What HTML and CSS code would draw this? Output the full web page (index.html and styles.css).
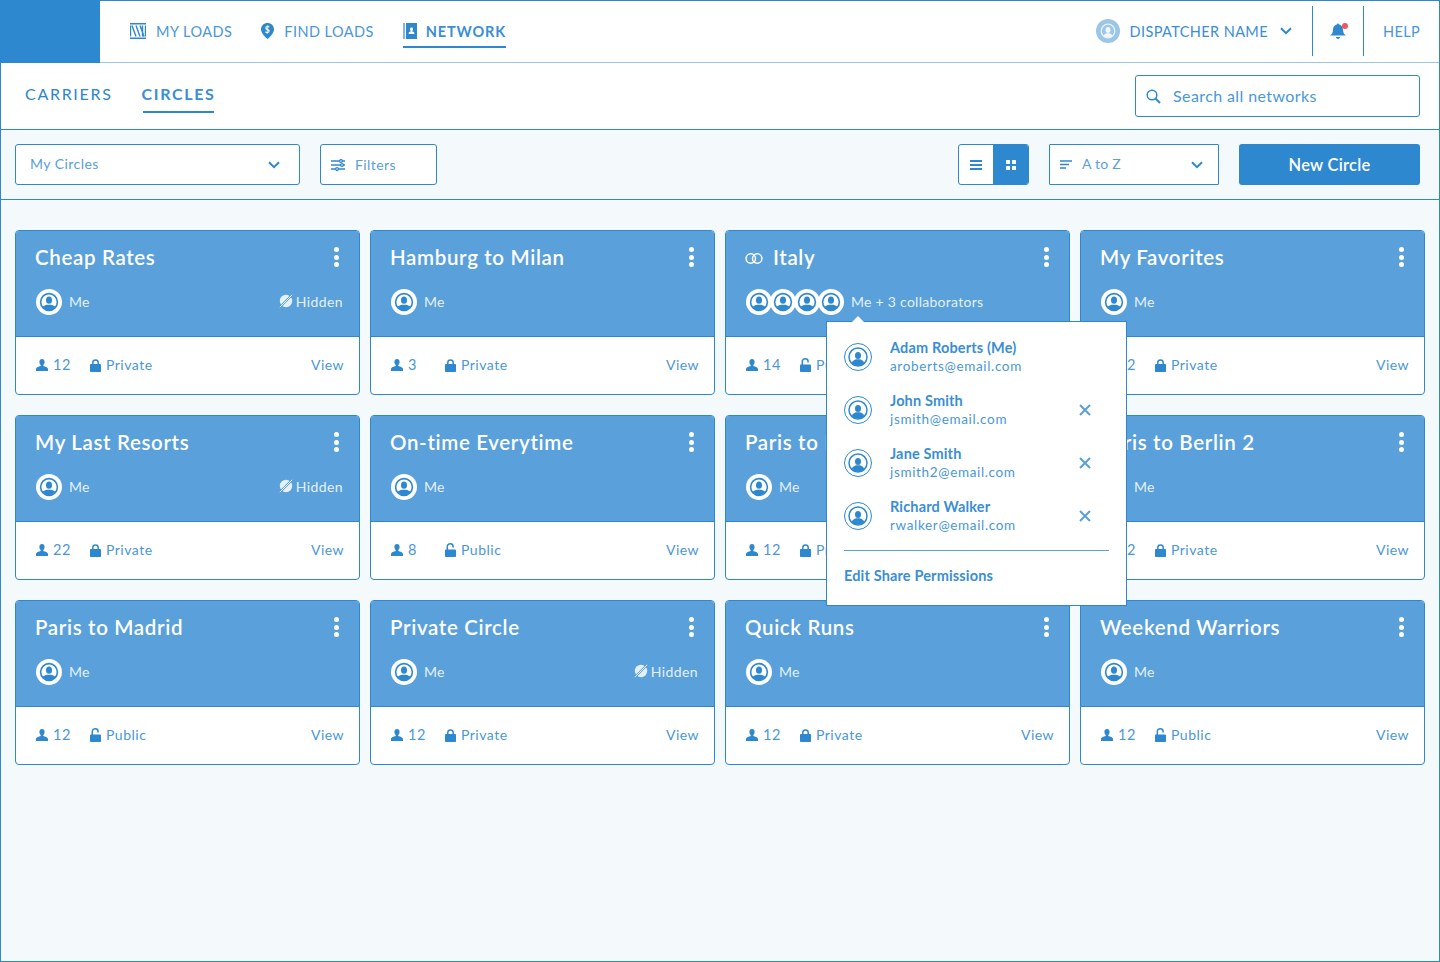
FILE: index.html
```html
<!DOCTYPE html>
<html lang="en">
<head>
<meta charset="utf-8">
<title>Circles</title>
<link rel="stylesheet" href="styles.css">
</head>
<body>
<svg class="defs" width="0" height="0" aria-hidden="true">
  <defs>
    <clipPath id="clip-ring"><circle cx="13" cy="13" r="8.2"/></clipPath>
    <symbol id="i-avatar" viewBox="0 0 26 26">
      <circle cx="13" cy="13" r="13" fill="#fff"/>
      <circle cx="13" cy="13" r="8.4" fill="none" stroke="#2e88cf" stroke-width="1.6"/>
      <g clip-path="url(#clip-ring)" fill="#2e88cf"><ellipse cx="13" cy="11.2" rx="3" ry="3.6"/><path d="M5 22c0-4 3-5.600 6-6.200h4c3 .6 6 2.200 6 6.200z"/></g>
    </symbol>
    <symbol id="i-avatar-line" viewBox="0 0 28 28">
      <circle cx="14" cy="14" r="13.500" fill="#fff" stroke="#2e88cf"/>
      <circle cx="14" cy="14" r="9" fill="none" stroke="#2e88cf" stroke-width="1.500"/>
      <g fill="#2e88cf"><ellipse cx="14" cy="12.500" rx="3" ry="3.500"/><path d="M7.500 20.500c1-3 3-3.700 4.500-4.200h4c1.500.5 3.500 1.200 4.500 4.200c-3.500 2.500-9.500 2.500-13 0z"/></g>
    </symbol>
    <symbol id="i-person" viewBox="0 0 12 12">
      <path fill="#2e88cf" d="M6 0c1.700 0 2.600 1.200 2.600 2.900 0 1.300-.6 2.400-1.300 3v1c1.800.6 4.700 1.300 4.700 3V12H0v-2.100c0-1.700 2.900-2.400 4.700-3v-1C4 5.300 3.400 4.200 3.400 2.900 3.400 1.200 4.300 0 6 0z"/>
    </symbol>
    <symbol id="i-lock" viewBox="0 0 11 13">
      <path fill="none" stroke="#2e88cf" stroke-width="1.500" d="M2.800 6V3.600C2.800 2 4 1 5.500 1s2.700 1 2.700 2.600V6"/>
      <rect y="5" width="11" height="8" rx=".8" fill="#2e88cf"/>
    </symbol>
    <symbol id="i-lock-open" viewBox="0 0 11 14">
      <path fill="none" stroke="#2e88cf" stroke-width="1.500" d="M2.300 7V3.500C2.300 1.900 3.600.8 5.200.8s2.900 1.100 2.900 2.700v.9"/>
      <rect y="6.500" width="11" height="7.500" rx=".8" fill="#2e88cf"/>
    </symbol>
    <symbol id="i-hidden" viewBox="0 0 14 14">
      <circle cx="7" cy="7" r="6.200" fill="#e4f0fa"/>
      <path d="M0 14L14 0" stroke="#5aa0da" stroke-width="2.200"/>
      <path d="M.8 13.200L13.200 .8" stroke="#e4f0fa" stroke-width="1"/>
    </symbol>
    <symbol id="i-chevron" viewBox="0 0 12 8">
      <path d="M1 1.300l5 4.800 5-4.800" fill="none" stroke="#2e88cf" stroke-width="2"/>
    </symbol>
    <symbol id="i-close" viewBox="0 0 12 12">
      <path d="M1 1l10 10M11 1L1 11" fill="none" stroke="#5aa0da" stroke-width="2"/>
    </symbol>
  </defs>
</svg>

<div class="app">
  <header class="topbar">
    <div class="logo"></div>
    <nav class="mainnav">
      <a class="navlink">
        <svg class="nav-icon" width="16" height="16" viewBox="0 0 16 16"><g fill="#2e88cf"><rect width="16" height="1.500"/><rect y="14.500" width="16" height="1.500"/><rect y="2.500" width="1.200" height="11"/><rect x="14.800" y="2.500" width="1.200" height="11"/></g><path d="M2 2.500l4 11M6 2.500l4 11M10 2.500l4 11M12.500 2.500v11" stroke="#2e88cf" stroke-width="1.400" fill="none"/></svg>
        MY LOADS
      </a>
      <a class="navlink">
        <svg class="nav-icon" width="13" height="16" viewBox="0 0 13 16"><path fill="#2e88cf" d="M6.500 0C10 0 13 2.700 13 6.200c0 3.800-4 7.800-6.500 9.800C4 14 0 10 0 6.200 0 2.700 3 0 6.500 0z"/><text class="pin-text" x="6.500" y="9.500" text-anchor="middle">$</text></svg>
        FIND LOADS
      </a>
      <a class="navlink is-current">
        <svg class="nav-icon" width="14" height="16" viewBox="0 0 14 16"><rect width="2" height="16" fill="#7fb6e2"/><rect x="3" width="11" height="16" fill="#2e88cf"/><path fill="#fff" d="M8.500 4.500c1 0 1.500.7 1.500 1.700 0 .7-.3 1.300-.7 1.600v.7c1 .3 2 .6 2 1.500v1H5.700v-1c0-.9 1-1.200 2-1.500v-.7c-.4-.3-.7-.9-.7-1.600 0-1 .5-1.700 1.500-1.700z"/></svg>
        NETWORK
      </a>
    </nav>
    <div class="usermenu">
      <svg class="user-avatar" width="24" height="24" viewBox="0 0 24 24"><circle cx="12" cy="12" r="12" fill="#9cc6e8"/><circle cx="12" cy="12" r="6.800" fill="none" stroke="#fff" stroke-width="1.300" opacity=".8"/><ellipse cx="12" cy="11" rx="2.500" ry="3" fill="#fff" opacity=".85"/><path d="M7.500 17c1-2.200 2.500-2.700 4.500-2.700s3.500.5 4.500 2.700c-2.500 1.500-6.500 1.500-9 0z" fill="#fff" opacity=".85"/></svg>
      <span class="username">DISPATCHER NAME</span>
      <svg class="chev" width="12" height="8"><use href="#i-chevron"/></svg>
    </div>
    <div class="bell-cell">
      <svg width="16" height="17" viewBox="0 0 16 17"><path fill="#2e88cf" d="M8 1.500c.7 0 1.100.4 1.200 1C11.500 3.100 13 5 13 7.500c0 3 1 4.700 3 6H0c2-1.300 3-3 3-6C3 5 4.500 3.100 6.800 2.500c.1-.6.500-1 1.200-1z"/><path fill="#2e88cf" d="M6 15h4c0 1-1 2-2 2s-2-1-2-2z"/></svg>
      <span class="bell-dot"></span>
    </div>
    <a class="help">HELP</a>
  </header>

  <div class="subbar">
    <a class="tab">CARRIERS</a>
    <a class="tab is-current">CIRCLES</a>
    <div class="search">
      <svg width="15" height="15" viewBox="0 0 15 15"><circle cx="6" cy="6" r="4.800" fill="none" stroke="#2e88cf" stroke-width="1.500"/><path d="M9.500 9.500L14 14" stroke="#2e88cf" stroke-width="2"/></svg>
      <span>Search all networks</span>
    </div>
  </div>

  <div class="toolbar">
    <div class="select select-circles"><span>My Circles</span><svg width="12" height="8"><use href="#i-chevron"/></svg></div>
    <div class="filters">
      <svg width="14" height="12" viewBox="0 0 14 12"><g fill="none" stroke="#2e88cf" stroke-width="1.300"><path d="M0 2h14M0 6h14M0 10h14"/><circle cx="10" cy="2" r="1.400" fill="#fff"/><circle cx="11" cy="6" r="1.400" fill="#fff"/><circle cx="6" cy="10" r="1.400" fill="#fff"/></g></svg>
      <span>Filters</span>
    </div>
    <div class="viewtoggle">
      <div class="view-btn">
        <svg width="12" height="10" viewBox="0 0 12 10"><path d="M0 1h12M0 5h12M0 9h12" stroke="#2e88cf" stroke-width="2"/></svg>
      </div>
      <div class="view-btn is-on">
        <svg width="10" height="10" viewBox="0 0 10 10"><g fill="#fff"><rect width="4" height="4" rx=".5"/><rect x="6" width="4" height="4" rx=".5"/><rect y="6" width="4" height="4" rx=".5"/><rect x="6" y="6" width="4" height="4" rx=".5"/></g></svg>
      </div>
    </div>
    <div class="select select-sort">
      <svg class="sort-icon" width="12" height="9" viewBox="0 0 12 9"><path d="M0 1h12M0 4.500h9M0 8h6" stroke="#2e88cf" stroke-width="1.600"/></svg>
      <span>A to Z</span>
      <svg class="sort-chev" width="12" height="8"><use href="#i-chevron"/></svg>
    </div>
    <button class="primary">New Circle</button>
  </div>

  <main class="grid">
    <article class="card">
      <div class="card-head">
        <div class="title-row"><h2>Cheap Rates</h2><span class="kebab"><i></i><i></i><i></i></span></div>
        <div class="owner-row"><svg class="av" width="26" height="26"><use href="#i-avatar"/></svg><span>Me</span><span class="hidden-tag"><svg width="14" height="14"><use href="#i-hidden"/></svg>Hidden</span></div>
      </div>
      <div class="card-foot"><span class="count"><svg width="12" height="12"><use href="#i-person"/></svg>12</span><span class="privacy"><svg width="11" height="13"><use href="#i-lock"/></svg>Private</span><a class="view">View</a></div>
    </article>

    <article class="card">
      <div class="card-head">
        <div class="title-row"><h2>Hamburg to Milan</h2><span class="kebab"><i></i><i></i><i></i></span></div>
        <div class="owner-row"><svg class="av" width="26" height="26"><use href="#i-avatar"/></svg><span>Me</span></div>
      </div>
      <div class="card-foot"><span class="count"><svg width="12" height="12"><use href="#i-person"/></svg>3</span><span class="privacy"><svg width="11" height="13"><use href="#i-lock"/></svg>Private</span><a class="view">View</a></div>
    </article>

    <article class="card has-popover">
      <div class="card-head">
        <div class="title-row"><svg class="shared" width="18" height="11" viewBox="0 0 18 11"><g fill="none" stroke="#fff" stroke-width="1.500"><circle cx="5.800" cy="5.500" r="4.700"/><circle cx="12.200" cy="5.500" r="4.700"/></g></svg><h2>Italy</h2><span class="kebab"><i></i><i></i><i></i></span></div>
        <div class="owner-row"><span class="stack"><svg width="26" height="26"><use href="#i-avatar"/></svg><svg width="26" height="26"><use href="#i-avatar"/></svg><svg width="26" height="26"><use href="#i-avatar"/></svg><svg width="26" height="26"><use href="#i-avatar"/></svg></span><span>Me + 3 collaborators</span></div>
      </div>
      <div class="card-foot"><span class="count"><svg width="12" height="12"><use href="#i-person"/></svg>14</span><span class="privacy"><svg width="11" height="14"><use href="#i-lock-open"/></svg>Public</span><a class="view">View</a></div>
      <div class="popover">
        <div class="person"><svg width="28" height="28"><use href="#i-avatar-line"/></svg><div class="person-text"><b>Adam Roberts (Me)</b><span>aroberts@email.com</span></div></div>
        <div class="person"><svg width="28" height="28"><use href="#i-avatar-line"/></svg><div class="person-text"><b>John Smith</b><span>jsmith@email.com</span></div><svg class="remove" width="12" height="12"><use href="#i-close"/></svg></div>
        <div class="person"><svg width="28" height="28"><use href="#i-avatar-line"/></svg><div class="person-text"><b>Jane Smith</b><span>jsmith2@email.com</span></div><svg class="remove" width="12" height="12"><use href="#i-close"/></svg></div>
        <div class="person"><svg width="28" height="28"><use href="#i-avatar-line"/></svg><div class="person-text"><b>Richard Walker</b><span>rwalker@email.com</span></div><svg class="remove" width="12" height="12"><use href="#i-close"/></svg></div>
        <a class="edit-link">Edit Share Permissions</a>
      </div>
    </article>

    <article class="card">
      <div class="card-head">
        <div class="title-row"><h2>My Favorites</h2><span class="kebab"><i></i><i></i><i></i></span></div>
        <div class="owner-row"><svg class="av" width="26" height="26"><use href="#i-avatar"/></svg><span>Me</span></div>
      </div>
      <div class="card-foot"><span class="count"><svg width="12" height="12"><use href="#i-person"/></svg>12</span><span class="privacy"><svg width="11" height="13"><use href="#i-lock"/></svg>Private</span><a class="view">View</a></div>
    </article>

    <article class="card">
      <div class="card-head">
        <div class="title-row"><h2>My Last Resorts</h2><span class="kebab"><i></i><i></i><i></i></span></div>
        <div class="owner-row"><svg class="av" width="26" height="26"><use href="#i-avatar"/></svg><span>Me</span><span class="hidden-tag"><svg width="14" height="14"><use href="#i-hidden"/></svg>Hidden</span></div>
      </div>
      <div class="card-foot"><span class="count"><svg width="12" height="12"><use href="#i-person"/></svg>22</span><span class="privacy"><svg width="11" height="13"><use href="#i-lock"/></svg>Private</span><a class="view">View</a></div>
    </article>

    <article class="card">
      <div class="card-head">
        <div class="title-row"><h2>On-time Everytime</h2><span class="kebab"><i></i><i></i><i></i></span></div>
        <div class="owner-row"><svg class="av" width="26" height="26"><use href="#i-avatar"/></svg><span>Me</span></div>
      </div>
      <div class="card-foot"><span class="count"><svg width="12" height="12"><use href="#i-person"/></svg>8</span><span class="privacy"><svg width="11" height="14"><use href="#i-lock-open"/></svg>Public</span><a class="view">View</a></div>
    </article>

    <article class="card">
      <div class="card-head">
        <div class="title-row"><h2>Paris to Berlin</h2><span class="kebab"><i></i><i></i><i></i></span></div>
        <div class="owner-row"><svg class="av" width="26" height="26"><use href="#i-avatar"/></svg><span>Me</span></div>
      </div>
      <div class="card-foot"><span class="count"><svg width="12" height="12"><use href="#i-person"/></svg>12</span><span class="privacy"><svg width="11" height="13"><use href="#i-lock"/></svg>Private</span><a class="view">View</a></div>
    </article>

    <article class="card">
      <div class="card-head">
        <div class="title-row"><h2>Paris to Berlin 2</h2><span class="kebab"><i></i><i></i><i></i></span></div>
        <div class="owner-row"><svg class="av" width="26" height="26"><use href="#i-avatar"/></svg><span>Me</span></div>
      </div>
      <div class="card-foot"><span class="count"><svg width="12" height="12"><use href="#i-person"/></svg>12</span><span class="privacy"><svg width="11" height="13"><use href="#i-lock"/></svg>Private</span><a class="view">View</a></div>
    </article>

    <article class="card">
      <div class="card-head">
        <div class="title-row"><h2>Paris to Madrid</h2><span class="kebab"><i></i><i></i><i></i></span></div>
        <div class="owner-row"><svg class="av" width="26" height="26"><use href="#i-avatar"/></svg><span>Me</span></div>
      </div>
      <div class="card-foot"><span class="count"><svg width="12" height="12"><use href="#i-person"/></svg>12</span><span class="privacy"><svg width="11" height="14"><use href="#i-lock-open"/></svg>Public</span><a class="view">View</a></div>
    </article>

    <article class="card">
      <div class="card-head">
        <div class="title-row"><h2>Private Circle</h2><span class="kebab"><i></i><i></i><i></i></span></div>
        <div class="owner-row"><svg class="av" width="26" height="26"><use href="#i-avatar"/></svg><span>Me</span><span class="hidden-tag"><svg width="14" height="14"><use href="#i-hidden"/></svg>Hidden</span></div>
      </div>
      <div class="card-foot"><span class="count"><svg width="12" height="12"><use href="#i-person"/></svg>12</span><span class="privacy"><svg width="11" height="13"><use href="#i-lock"/></svg>Private</span><a class="view">View</a></div>
    </article>

    <article class="card">
      <div class="card-head">
        <div class="title-row"><h2>Quick Runs</h2><span class="kebab"><i></i><i></i><i></i></span></div>
        <div class="owner-row"><svg class="av" width="26" height="26"><use href="#i-avatar"/></svg><span>Me</span></div>
      </div>
      <div class="card-foot"><span class="count"><svg width="12" height="12"><use href="#i-person"/></svg>12</span><span class="privacy"><svg width="11" height="13"><use href="#i-lock"/></svg>Private</span><a class="view">View</a></div>
    </article>

    <article class="card">
      <div class="card-head">
        <div class="title-row"><h2>Weekend Warriors</h2><span class="kebab"><i></i><i></i><i></i></span></div>
        <div class="owner-row"><svg class="av" width="26" height="26"><use href="#i-avatar"/></svg><span>Me</span></div>
      </div>
      <div class="card-foot"><span class="count"><svg width="12" height="12"><use href="#i-person"/></svg>12</span><span class="privacy"><svg width="11" height="14"><use href="#i-lock-open"/></svg>Public</span><a class="view">View</a></div>
    </article>
  </main>
</div>
</body>
</html>
```

FILE: styles.css
```css
* { box-sizing: border-box; }
html, body { margin: 0; padding: 0; }
body { font-family: Lato, "Liberation Sans", sans-serif; color: #3a8ed4; }
.defs { position: absolute; }
svg { display: block; flex: none; }

.app {
  width: 1440px;
  height: 962px;
  border: 1px solid #2e88cf;
  background: #f4f9fc;
  overflow: hidden;
}

/* top bar */
.topbar {
  height: 62px;
  display: flex;
  align-items: stretch;
  background: #fff;
  border-bottom: 1px solid #9cc6e8;
}
.logo { width: 99px; margin-bottom: -1px; background: #2e88cf; }
.mainnav { display: flex; margin-left: 30px; gap: 29px; }
.navlink {
  display: flex;
  align-items: center;
  gap: 10px;
  height: 47px;
  padding-top: 13px;
  font-size: 14.500px;
  letter-spacing: .45px;
  color: #4a97d8;
  white-space: nowrap;
}
.navlink.is-current {
  padding-top: 15px;
  font-weight: 700;
  letter-spacing: .85px;
  color: #3a8ed4;
  border-bottom: 2px solid #2e88cf;
  gap: 9px;
}
.pin-text { font: 700 8.500px Lato, sans-serif; fill: #fff; }

.usermenu { margin-left: auto; display: flex; align-items: center; gap: 10px; padding-bottom: 1px; }
.username { font-size: 14.500px; letter-spacing: .4px; color: #3a8ed4; white-space: nowrap; }
.chev { margin: 0 20px 0 2px; }
.bell-cell {
  position: relative;
  width: 52px;
  height: 50px;
  margin-top: 5px;
  border-left: 1px solid #2e88cf;
  border-right: 1px solid #2e88cf;
  display: flex;
  align-items: center;
  justify-content: center;
  padding: 0 0 1px 0;
}
.bell-dot {
  position: absolute;
  left: 29px;
  top: 17px;
  width: 6px;
  height: 6px;
  border-radius: 50%;
  background: #f0545c;
}
.help {
  width: 75px;
  display: flex;
  align-items: center;
  justify-content: flex-end;
  padding: 0 19px 1px 0;
  font-size: 14.500px;
  letter-spacing: .35px;
  color: #4a97d8;
}

/* sub bar */
.subbar {
  height: 67px;
  display: flex;
  align-items: stretch;
  padding: 0 19px 0 24px;
  gap: 29px;
  background: #fff;
  border-bottom: 1px solid #2e88cf;
}
.tab {
  display: flex;
  align-items: center;
  height: 50px;
  padding-top: 11px;
  font-size: 16px;
  letter-spacing: 1.700px;
  color: #2d86c8;
  white-space: nowrap;
}
.tab.is-current {
  position: relative;
  font-weight: 700;
  letter-spacing: 1.650px;
  color: #3a8ed4;
}
.tab.is-current::after {
  content: "";
  position: absolute;
  left: 1px;
  right: 1px;
  bottom: 0;
  height: 2px;
  background: #2e88cf;
}
.search {
  margin: 12px 0 0 auto;
  width: 285px;
  height: 42px;
  display: flex;
  align-items: center;
  gap: 12px;
  padding-left: 10px;
  border: 1px solid #2e88cf;
  border-radius: 3px;
  font-size: 16px;
  letter-spacing: .4px;
  color: #4a97d8;
}
.search span { padding-bottom: 2px; }

/* toolbar */
.toolbar {
  height: 70px;
  display: flex;
  align-items: flex-start;
  padding: 14px 19px 0 14px;
  border-bottom: 1px solid #2e88cf;
}
.select, .filters, .viewtoggle, .primary { height: 41px; border-radius: 3px; }
.select, .filters {
  display: flex;
  align-items: center;
  background: #fff;
  border: 1px solid #2e88cf;
  font-size: 14px;
  color: #5aa0da;
}
.select span { padding-bottom: 2px; }
.select-circles { width: 285px; padding: 0 19px 0 14px; justify-content: space-between; letter-spacing: .45px; }
.filters { width: 117px; margin-left: 20px; padding-left: 10px; gap: 10px; letter-spacing: .4px; }
.viewtoggle {
  display: flex;
  width: 71px;
  margin-left: auto;
  background: #fff;
  border: 1px solid #2e88cf;
  overflow: hidden;
}
.view-btn { width: 34px; display: flex; align-items: center; justify-content: center; }
.view-btn.is-on { flex: 1; background: #2e88cf; }
.select-sort { width: 170px; margin-left: 20px; padding: 0 15px 0 10px; border-radius: 1px; letter-spacing: .25px; }
.sort-icon { margin-right: 10px; }
.sort-chev { margin-left: auto; }
.primary {
  width: 181px;
  margin-left: 20px;
  border: 0;
  background: #2e88cf;
  color: #fff;
  font: 600 16.500px Lato, sans-serif;
  letter-spacing: .25px;
  padding: 0;
}

/* cards */
.grid {
  display: grid;
  grid-template-columns: repeat(4, 345px);
  grid-auto-rows: 165px;
  gap: 20px 10px;
  padding: 30px 0 0 14px;
}
.card {
  position: relative;
  display: flex;
  flex-direction: column;
  background: #fff;
  border: 1px solid #2e88cf;
  border-radius: 4px;
}
.card-head {
  height: 106px;
  padding: 0 16px 0 19px;
  background: #5aa0da;
  border-bottom: 1px solid #2e88cf;
  border-radius: 3px 3px 0 0;
}
.title-row { height: 54px; display: flex; align-items: center; color: #fff; }
.title-row h2 {
  margin: 0 0 2px;
  font-size: 20.500px;
  font-weight: 600;
  letter-spacing: .65px;
  color: #fff;
  white-space: nowrap;
}
.shared { margin-right: 10px; }
.kebab { margin-left: auto; margin-right: 4px; display: flex; flex-direction: column; gap: 2.500px; padding-bottom: 2px; }
.kebab i { width: 5px; height: 5px; border-radius: 50%; background: #fff; }
.owner-row {
  display: flex;
  align-items: center;
  height: 34px;
  padding-left: 1px;
  font-size: 14px;
  letter-spacing: .27px;
  color: #e4f0fa;
}
.owner-row > span { padding-bottom: 2px; }
.av { margin-right: 7px; }
.owner-row > .stack { display: flex; margin-right: 7px; padding-bottom: 0; }
.stack svg + svg { margin-left: -2px; }
.hidden-tag { margin-left: auto; display: flex; align-items: center; gap: 3px; letter-spacing: .4px; }
.card-foot {
  flex: 1;
  display: flex;
  align-items: center;
  padding: 0 15px 3px 20px;
  font-size: 14px;
  letter-spacing: .5px;
  color: #4a97d8;
}
.card-foot svg { margin-top: 2px; }
.count { width: 54px; display: flex; align-items: center; gap: 5px; font-size: 14.500px; letter-spacing: .7px; }
.privacy { display: flex; align-items: center; gap: 5px; }
.view { margin-left: auto; font-size: 14px; letter-spacing: .45px; }

/* popover */
.popover {
  position: absolute;
  left: 100px;
  top: 90px;
  width: 301px;
  height: 285px;
  padding: 8px 17px 0;
  background: #fff;
  border: 1px solid #2e88cf;
  z-index: 2;
}
.popover::before {
  content: "";
  position: absolute;
  left: 24px;
  top: -6px;
  width: 14px;
  height: 14px;
  background: #fff;
  transform: rotate(45deg) scale(.7);
}
.person { position: relative; height: 53px; display: flex; align-items: center; gap: 18px; }
.person-text { display: flex; flex-direction: column; }
.person-text b { font-size: 14.500px; font-weight: 700; line-height: 18px; letter-spacing: .15px; color: #3a8ed4; white-space: nowrap; }
.person-text span { font-size: 13.500px; letter-spacing: .65px; line-height: 18px; color: #4a97d8; white-space: nowrap; }
.remove { margin-left: auto; margin-right: 18px; }
.edit-link {
  display: block;
  margin-top: 8px;
  padding-top: 16px;
  border-top: 1px solid #5aa0da;
  font-size: 14.500px;
  font-weight: 700;
  line-height: 18px;
  letter-spacing: .15px;
  color: #3a8ed4;
}
```
